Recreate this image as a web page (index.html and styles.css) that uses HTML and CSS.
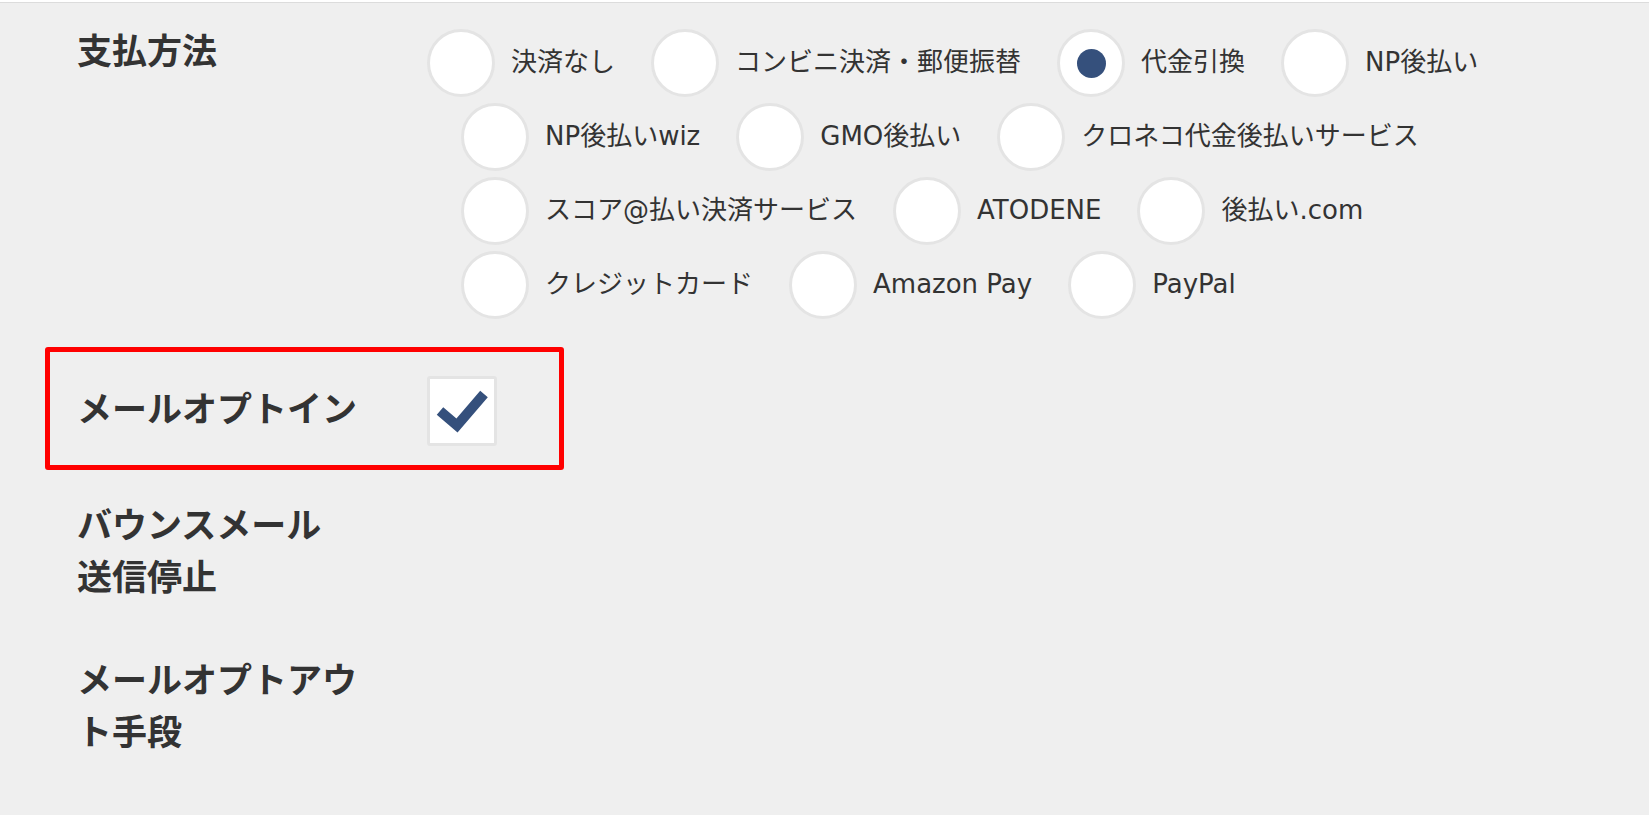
FILE: index.html
```html
<!DOCTYPE html>
<html lang="ja">
<head>
    <meta charset="UTF-8">
    <title>会員設定</title>
    <link rel="stylesheet" href="styles.css">
</head>
<body>
<div class="panel">
    <!--支払方法-->
    <div class="row row-pay">
        <div class="label">支払方法</div>
        <div class="options">
            <label class="opt"><span class="radio"></span><span class="opt-text">決済なし</span></label>
            <label class="opt"><span class="radio"></span><span class="opt-text">コンビニ決済・郵便振替</span></label>
            <label class="opt"><span class="radio on"></span><span class="opt-text">代金引換</span></label>
            <label class="opt"><span class="radio"></span><span class="opt-text">NP後払い</span></label>
            <label class="opt"><span class="radio"></span><span class="opt-text">NP後払いwiz</span></label>
            <label class="opt"><span class="radio"></span><span class="opt-text">GMO後払い</span></label>
            <label class="opt"><span class="radio"></span><span class="opt-text">クロネコ代金後払いサービス</span></label>
            <label class="opt"><span class="radio"></span><span class="opt-text">スコア@払い決済サービス</span></label>
            <label class="opt"><span class="radio"></span><span class="opt-text">ATODENE</span></label>
            <label class="opt"><span class="radio"></span><span class="opt-text">後払い.com</span></label>
            <label class="opt"><span class="radio"></span><span class="opt-text">クレジットカード</span></label>
            <label class="opt"><span class="radio"></span><span class="opt-text">Amazon Pay</span></label>
            <label class="opt"><span class="radio"></span><span class="opt-text">PayPal</span></label>
        </div>
    </div>
    <!--メールオプトイン-->
    <div class="row row-optin">
        <div class="label">メールオプトイン</div>
        <span class="checkbox">
            <svg viewBox="3 3 64 64" width="64" height="64">
                <polyline points="13,35 30,49.5 57,18" fill="none" stroke="#35507c" stroke-width="10"/>
            </svg>
        </span>
    </div>
    <div class="row">
        <div class="label">バウンスメール<br>送信停止</div>
    </div>
    <div class="row">
        <div class="label">メールオプトアウト手段</div>
    </div>
</div>
</body>
</html>
```
FILE: styles.css
```css
body {
    margin: 0;
    padding: 0;
    background: #fff;
    color: #333;
    font-family: "DejaVu Sans", "Noto Sans CJK JP", sans-serif;
}

.panel {
    margin-top: 2px;
    min-height: calc(100vh - 3px);
    border-top: 1px solid #dcdcdc;
    background: #efefef;
    padding-left: 77px;
}

.row {
    display: flex;
    align-items: flex-start;
    padding: 26px 0 25px;
}

.label {
    width: 300px;
    margin-right: 50px;
    flex-shrink: 0;
    font-family: "Noto Sans CJK JP", sans-serif;
    font-size: 35px;
    font-weight: bold;
    line-height: 52px;
}

.row-pay .label {
    margin-top: -6px;
}

.options {
    flex: 1;
    display: flex;
    flex-wrap: wrap;
    column-gap: 36px;
    row-gap: 6px;
    padding-left: 34px;
}

.opt {
    display: flex;
    align-items: center;
    gap: 16px;
    height: 68px;
    cursor: pointer;
}

.opt:first-child {
    margin-left: -34px;
}

.radio {
    width: 62px;
    height: 62px;
    border: 3px solid #e4e4e4;
    border-radius: 50%;
    background: #fff;
    display: grid;
    place-items: center;
    flex-shrink: 0;
}

.radio.on::after {
    content: "";
    width: 29px;
    height: 29px;
    border-radius: 50%;
    background: #35507c;
}

.opt-text {
    font-size: 26px;
    line-height: 1.3;
    white-space: nowrap;
}

/* 注目枠 */
.row-optin {
    position: relative;
}

.row-optin .label {
    padding-top: 11px;
}

.row-optin::after {
    content: "";
    position: absolute;
    left: -32px;
    top: 3px;
    width: 519px;
    height: 123px;
    box-sizing: border-box;
    border: 5px solid #ff0000;
    border-radius: 3px;
}

.checkbox {
    margin-top: 6px;
    width: 64px;
    height: 64px;
    border: 3px solid #e4e4e4;
    border-radius: 3px;
    background: #fff;
}

.checkbox svg {
    display: block;
}
```
